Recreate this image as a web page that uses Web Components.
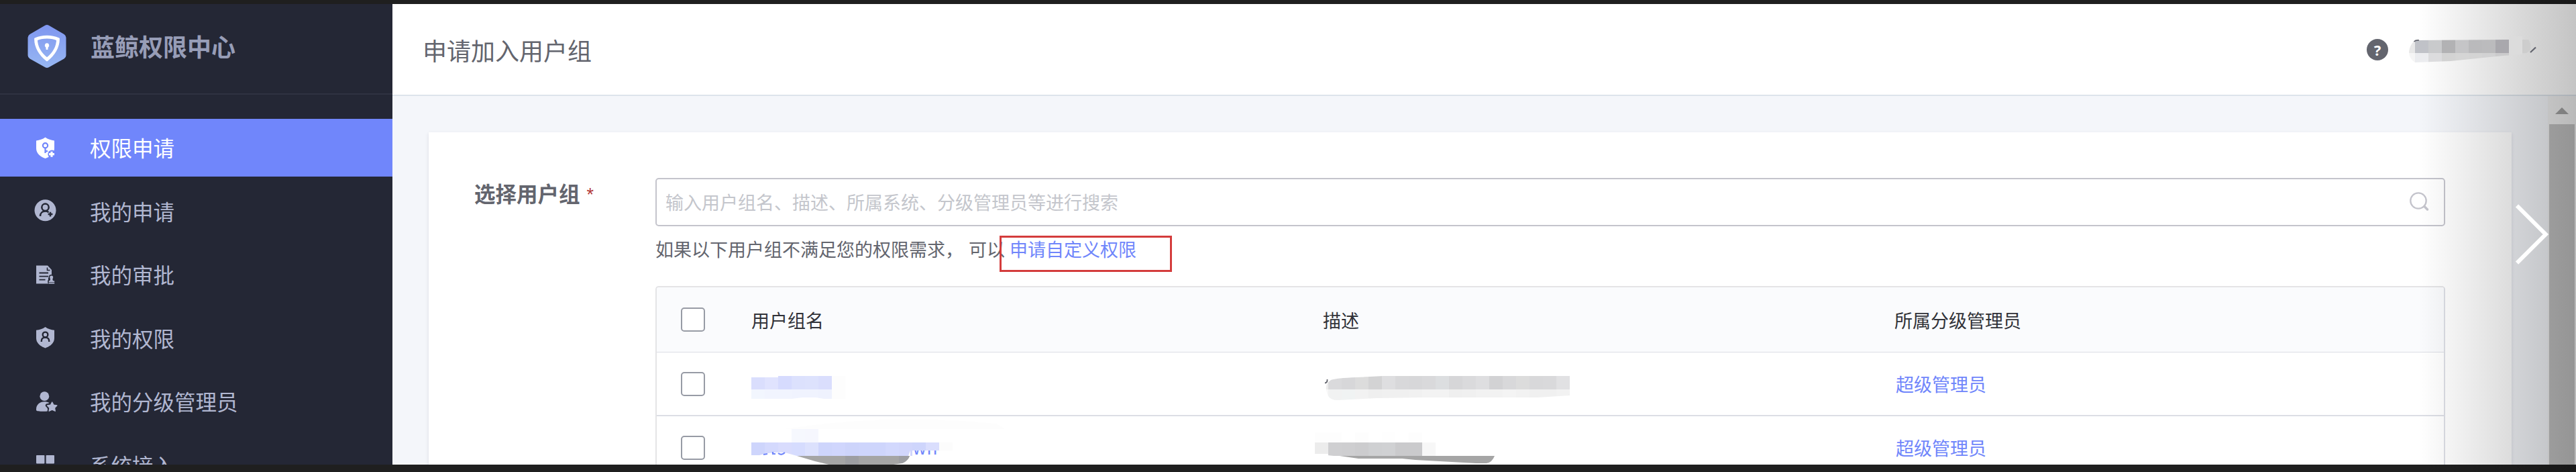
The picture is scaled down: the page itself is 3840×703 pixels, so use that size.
<!DOCTYPE html>
<html lang="zh-CN">
<head>
<meta charset="utf-8">
<title>蓝鲸权限中心</title>
<style>
html,body{margin:0;padding:0;width:100%;height:703px;overflow:hidden;background:#1f1f1f}
body{font-family:"Noto Sans CJK SC","Liberation Sans",sans-serif;color:#63656e}
</style>
</head>
<body>
<iam-app></iam-app>
<script>
const define = (name, html) => {
  const t = document.createElement('template');
  t.innerHTML = html;
  customElements.define(name, class extends HTMLElement {
    constructor() {
      super();
      this.attachShadow({ mode: 'open' }).appendChild(t.content.cloneNode(true));
    }
  });
};

const shield = 'M17.5 2.5C21.5 5.3 26 6.9 31 7.4V19C31 27 24.5 31.5 17.5 34C10.5 31.5 4 27 4 19V7.4C9 6.9 13.5 5.3 17.5 2.5Z';
const icons = {
  apply: `<path d="${shield}"/><g fill="none" stroke="var(--hole)" stroke-width="2.2"><circle cx="17.5" cy="14.7" r="3.6"/><path d="M17.5 18.3V26M17.5 23.2H21"/></g><circle cx="27.5" cy="27.7" r="6.2" fill="var(--hole)"/><path d="M27 23.7V31.7M23 27.7H31" stroke="currentColor" stroke-width="3.2"/>`,
  request: `<circle cx="17.5" cy="17.3" r="16"/><g fill="none" stroke="var(--hole)" stroke-width="2.5"><circle cx="17.5" cy="12.8" r="5.2"/><path d="M10 26C10 21.5 13 18.6 17.5 18.6C19.8 18.6 21.3 19.2 22.6 20.3M25 19.8V26.4M21.6 23.1H28.4"/></g>`,
  approve: `<path d="M4 4.5H21L27 11V19.5L22 23V31.5H4Z"/><path d="M20.5 7.5V11.5H24.5" fill="none" stroke="var(--hole)" stroke-width="1.6"/><path d="M8.5 15.5H22M8.5 20.6H22M8.5 25.6H17.5" stroke="var(--hole)" stroke-width="1.9"/><path d="M23.8 26.2C25 24.5 23.4 23.8 23.4 22A3.3 3.3 0 0 1 30 22C30 23.8 28.3 24.5 29.5 26.2L32 27V30H22V27Z" stroke="var(--hole)" stroke-width="1.6"/><path d="M22.6 30.8H31.2" stroke="currentColor" stroke-width="1.6"/>`,
  perm: `<path d="${shield}" transform="translate(0 -.6)"/><g fill="none" stroke="var(--hole)" stroke-width="2.4"><circle cx="17.5" cy="13.4" r="3.8"/><path d="M11.8 24V23C11.8 19.6 14 17.6 17.5 17.6S23.2 19.6 23.2 23V24"/></g>`,
  manager: `<circle cx="16.3" cy="10.2" r="6.9"/><path d="M4 29.5C4 22.5 9.5 18.2 16 18.2C19 18.2 21.5 18.8 23.5 20L19 22.5L20.5 27L21.5 32.5C15 33 4.5 33 4 31Z"/><path d="M27.7 18.3L30 23.2L35.2 23.8L31.3 27.4L32.4 32.8L27.7 30L23 32.8L24.1 27.4L20.2 23.8L25.4 23.2Z" stroke="var(--hole)" stroke-width="5" stroke-linejoin="round" style="fill:var(--hole)"/><path d="M27.7 19L30 23.3L34.8 24L31.4 27.4L32.2 32.2L27.7 30L23.2 32.2L24 27.4L20.6 24L25.4 23.3Z" stroke="currentColor" stroke-width="1.4" stroke-linejoin="round"/>`,
  system: `<rect x="4" y="4" width="12.4" height="12.4" rx=".8"/><rect x="18.6" y="4" width="12.4" height="12.4" rx=".8"/><rect x="4" y="18.6" width="12.4" height="12.4"/><rect x="18.6" y="18.6" width="12.4" height="12.4"/>`
};

customElements.define('nav-item', class extends HTMLElement {
  constructor() { super(); this.attachShadow({ mode: 'open' }); }
  connectedCallback() {
    this.shadowRoot.innerHTML = `<style>
      :host{--hole:#242735;display:flex;align-items:center;box-sizing:border-box;height:85.5px;padding-left:50px;gap:48px;color:#b1b7d1;font-size:31.5px;line-height:42px;white-space:nowrap;flex:none}
      :host([active]){--hole:#7086fb;background:#7086fb;color:#fff}
      svg{width:36px;height:36px;flex:none;overflow:visible;fill:currentColor}
      span{padding-bottom:1px}
      </style><svg viewBox="0 0 36 36">${icons[this.getAttribute('icon')]}</svg><span><slot></slot></span>`;
  }
});

define('side-bar', `<style>
  :host{display:flex;flex-direction:column;background:#242735;overflow:hidden;min-height:0}
  header{display:flex;align-items:center;gap:36px;height:133px;padding-left:41px;border-bottom:2px solid #2f3241;flex:none}
  svg{width:58px;height:64px;flex:none;margin-bottom:7px}
  h1{margin:0 0 10px;font-size:36px;line-height:48px;font-weight:700;color:#979db7;white-space:nowrap}
  nav{display:flex;flex-direction:column;gap:9px;padding-top:36px}
</style>
<header>
  <svg viewBox="0 0 58 64"><defs><linearGradient id="g" x1="0" y1="0" x2="0" y2="1"><stop offset="0" stop-color="#7f96f0"/><stop offset="1" stop-color="#97b7f2"/></linearGradient></defs>
    <path d="M26.3 .8Q29 -.8 31.700 .8L54.500 14Q57.500 16 57.500 19V45.500Q57.500 48.500 54.500 50.500L31.700 63.300Q29 64.700 26.300 63.300L3.500 50.500Q.5 48.500 .5 45.500V19Q.5 16 3.500 14Z" fill="url(#g)"/>
    <path d="M12.500 21.500C22 17 36 17 45.500 21.500C45.500 33 38.500 44 29 51.500C19.500 44 12.500 33 12.500 21.500Z" fill="none" stroke="#fff" stroke-width="4.800"/>
    <path d="M29 27.300A3.300 3.300 0 0 1 30.700 33.400L30.300 37H27.700L27.300 33.400A3.300 3.300 0 0 1 29 27.300Z" fill="#fff"/></svg>
  <h1>蓝鲸权限中心</h1>
</header>
<nav>
  <nav-item icon="apply" active>权限申请</nav-item>
  <nav-item icon="request">我的申请</nav-item>
  <nav-item icon="approve">我的审批</nav-item>
  <nav-item icon="perm">我的权限</nav-item>
  <nav-item icon="manager">我的分级管理员</nav-item>
  <nav-item icon="system">系统接入</nav-item>
</nav>`);

/* Pixelated cover over private text: [y, height, x, cell width, colours] per band */
const cells = rows => rows.map(([y, h, x, w, cols]) =>
  cols.split(' ').map((c, i) => `<rect x="${x + i * w}" y="${y}" width="${w}" height="${h}" fill="#${c}"/>`).join('')).join('');
const masks = {
  user: { w: 190, h: 39, body:
    `<clipPath id="c"><path d="M9 6L149 5V0H169V5H178Q183 12 181 20Q178 25 169 27L140 29L62 37L9 39Q0 33 0 23Q1 13 9 6Z"/></clipPath><g clip-path="url(#c)">` +
    cells([[5,20,-11,20,'e8e8e8 c0c2c8 c9cacc b2b2b4 c5c5c7 bababc bbbbbd a9a8ad dcdcdc cdcdcd'],[25,14,-11,20,'f5f5f5 ebecef dcdcde d3d3d3 d5d5d5 d4d4d4 d2d2d3 cbcbcc dcdcdc d5d5d5'],[0,5,149,20,'dcdcdc']]) +
    `</g><path d="M7.500 8Q10 5.500 15 6" fill="none" stroke="#63656e" stroke-width="1.600"/><path d="M181 24L189 16.500" stroke="#63656e" stroke-width="2.300"/>` },
  name1: { w: 140, h: 36, body:
    cells([[2,18,0,20,'dadefd e0e3fe'],[0,20,40,20,'d6dbfe dce1fd dde2fd dadefd'],[20,14,0,20,'f2f6fe f1f4fe f1f4fe f0f3fe f0f3fe eff2fe'],[0,34,120,20,'fdfdfd']]) + `<path d="M60 34L76 32H96L108 34Z" fill="#fff"/>` },
  name2: { w: 400, h: 84, body:
    `<path d="M50 32Q200 8 365 24L378 32Z" fill="#fdfdfd"/><text x="241" y="70" font-size="27" font-family="Liberation Sans" fill="#7086fb" textLength="36">wn</text>` +
    cells([[32,20,60,20,'f6f8fe f6f7fe'],[52,20,0,20,'ced5fc d4d9fd d9dcfd d6dcfe dce1fd ced5fc d0d6fd cdd4fb ced5fc ced5fc d2d8fd d1d6fc'],[52,12,240,20,'ced5fc dadefd'],[52,12,280,20,'fcfcfc']]) +
    `<path d="M0 71H12Q30 66 50 67L68 72H0Z" fill="#fff"/><path d="M18 70L24 69M32 66V69H36M40 68Q45 72 50 67" stroke="#7086fb" stroke-width="2.200" fill="none"/><path d="M237 64V72H234Z" fill="#fff"/>` +
    `<path d="M68 72H236Q234 79 225 83L205 86V88H128L95 80Z" fill="#a5a5a5"/><path d="M140 72H160V88H140ZM220 72H236Q234 79 225 83L220 83Z" fill="#9d9ea2"/>` },
  desc1: { w: 370, h: 40, body:
    `<clipPath id="c"><path d="M12 6Q20 3 50 2L90 0H368V29L320 32H150L80 33L22 36Q12 36 8 30Q2 18 7 10Z"/></clipPath><g clip-path="url(#c)">` +
    cells([[0,20,-12,20,'ededed dadadc d7d7d9 dcdcdc d3d3d4 dedee0 d8d8da d7d7d9 d9d9db dcdee0 d6d6d8 dadadc dedee0 d2d2d4 d8d8da dcdcdc d8d8da d9d9db e1e1e3'],[20,17,-12,20,'f8f8f8 f1f2f2 f0f3f3 f2f2f2 efefef f0f0f0 f0f0f0 f1f1f1 f3f3f3 f3f3f3 efefef f0f0f0 f2f2f2 f2f2f2 f4f4f4 f2f2f2 f0f0f0 f0f0f0 f2f2f2']]) +
    `</g><path d="M3 10.500Q7 10 6.500 5" fill="none" stroke="#63656e" stroke-width="1.800"/>` },
  desc2: { w: 280, h: 52, body:
    cells([[5,15,0,20,'fdfdfd fdfdfd ffffff fdfdfd ffffff fefefe ffffff fdfdfd'],[20,17,0,20,'ececec'],[20,20,20,20,'cfcfd1 ceced0 ccccce cfd0d2 d0d1d3 cacacc cacacc f7f7f7']]) +
    `<path d="M0 37L28 40H0Z" fill="#fff"/><path d="M37 40H268Q264 50 256 51H240L150 46L130 44H65Z" fill="#a5a5a5"/>` }
};
customElements.define('pixel-mask', class extends HTMLElement {
  constructor() { super(); this.attachShadow({ mode: 'open' }); }
  connectedCallback() {
    const m = masks[this.getAttribute('kind')];
    this.shadowRoot.innerHTML = `<style>:host{display:block;flex:none}svg{display:block;overflow:visible}</style><svg width="${m.w}" height="${m.h}">${m.body}</svg>`;
  }
});

define('top-bar', `<style>
  :host{display:flex;align-items:center;justify-content:space-between;height:137px;box-sizing:border-box;padding:2px 59px 0 45px;background:#fff;border-bottom:2px solid #dde4eb;flex:none}
  h2{margin:0;font-size:36px;font-weight:400;line-height:48px;color:#63656e;padding-bottom:2px}
  .right{display:flex;align-items:center;gap:31px;padding-bottom:2px}
  .q{width:32px;height:32px;border-radius:50%;background:#63656e;color:#fff;display:grid;place-items:center;font:700 22px/32px "Noto Sans",sans-serif}
  pixel-mask{position:relative;z-index:5}
</style>
<h2>申请加入用户组</h2>
<div class="right"><div class="q">?</div><pixel-mask kind="user"></pixel-mask></div>`);

define('search-box', `<style>
  :host{display:flex;align-items:center;justify-content:space-between;box-sizing:border-box;height:72px;padding:0 21px 0 13px;border:2px solid #c4c4cc;border-radius:5px;background:#fff;color:#c4c6cc;font-size:27px;line-height:36px}
  svg{width:31px;height:30px;fill:none;stroke:#c4c4cc;stroke-linecap:round;margin-bottom:3px}
</style>
<span><slot></slot></span>
<svg viewBox="0 0 31 30"><circle cx="14" cy="14" r="11.700" stroke-width="2.300"/><path d="M23 22.500L27.500 27" stroke-width="3.500"/></svg>`);

define('check-box', `<style>:host{display:block;box-sizing:border-box;width:36px;height:36px;border:2px solid #979ba5;border-radius:5px;background:#fff}</style>`);

define('group-row', `<style>
  :host{display:grid;grid-template-columns:108px 852px 852px 1fr;height:95px;box-sizing:border-box;border-bottom:2px solid #dcdee5;font-size:27px;line-height:36px;color:#7086fb;background:#fff;flex:none}
  :host([head]){background:#fafbfd;color:#313238;height:97px;border-bottom-width:1px}
  .cell{display:flex;align-items:center;padding-left:33px;min-width:0}
  .check{padding-left:36px;box-sizing:border-box}
  :host([head]) .check{border-bottom:1px solid #dcdee5;height:97px}
  .last{padding-left:35px}
  :host([head]) .last{padding-left:33px}
</style>
<div class="cell check"><check-box></check-box></div>
<div class="cell"><slot name="name"></slot></div>
<div class="cell"><slot name="desc"></slot></div>
<div class="cell last"><slot name="admin"></slot></div>`);

define('group-table', `<style>
  :host{display:flex;flex-direction:column;border:2px solid #e4e4e6;border-right-color:#dcdee5;border-bottom:0;border-radius:5px 5px 0 0;overflow:hidden;flex:1;min-height:0}
  .n1{margin-top:12px}
  .n2{margin-top:-13px;align-self:flex-start}
  .d1{margin:16px 0 0 0}
  .d2{margin:19px 0 0 -12px;align-self:flex-start}
</style>
<group-row head><span slot="name">用户组名</span><span slot="desc">描述</span><span slot="admin">所属分级管理员</span></group-row>
<group-row><pixel-mask slot="name" class="n1" kind="name1"></pixel-mask><pixel-mask slot="desc" class="d1" kind="desc1"></pixel-mask><span slot="admin">超级管理员</span></group-row>
<group-row><pixel-mask slot="name" class="n2" kind="name2"></pixel-mask><pixel-mask slot="desc" class="d2" kind="desc2"></pixel-mask><span slot="admin">超级管理员</span></group-row>`);

define('form-card', `<style>
  :host{display:grid;grid-template-columns:270px 2668px;box-sizing:border-box;background:#fff;box-shadow:0 2px 5px rgba(60,60,90,.14);padding:68px 0 0 68px;min-height:0;overflow:hidden}
  .label{font-size:31.500px;line-height:42px;font-weight:700;color:#63656e;padding-top:1px;white-space:nowrap}
  .label i{font:400 27px/36px "Liberation Sans",sans-serif;color:#b33b3b;margin-left:10px;vertical-align:2px}
  .field{display:flex;flex-direction:column;min-height:0}
  .tip{display:flex;align-items:center;height:36px;margin:16px 0 37px;font-size:27px;line-height:36px;white-space:pre}
  .tip>span+span{margin-left:8px}
  .tip>.link{position:relative;color:#7086fb;margin-left:7px}
  .mark{position:absolute;left:-15px;top:-2px;width:257px;height:54px;box-sizing:border-box;border:3px solid #d43c3c}
</style>
<div class="label">选择用户组<i>*</i></div>
<div class="field">
  <search-box>输入用户组名、描述、所属系统、分级管理员等进行搜索</search-box>
  <div class="tip"><span>如果以下用户组不满足您的权限需求，</span><span>可以</span><span class="link">申请自定义权限<span class="mark"></span></span></div>
  <group-table></group-table>
</div>`);

define('scroll-bar', `<style>
  :host{display:flex;flex-direction:column;align-items:center;background:#f1f1f1;width:42px;box-sizing:border-box}
  svg{width:20px;height:10px;margin:17px 0 15px;flex:none}
  .thumb{flex:1;width:38px;background:#c1c1c1}
</style><svg viewBox="0 0 20 10"><path d="M10 0L20 10H0Z" fill="#a3a3a3"/></svg><div class="thumb"></div>`);

define('next-shade', `<style>
  :host{position:absolute;right:0;top:0;width:235px;height:703px;background:linear-gradient(90deg,rgba(0,0,0,0),rgba(0,0,0,.23));pointer-events:none;z-index:3}
  svg{position:absolute;left:145px;top:300px;width:52px;height:98px;overflow:visible}
</style><svg viewBox="0 0 52 98"><path d="M2 6.300L44.800 49L2 91.700" fill="none" stroke="#fff" stroke-width="6"/></svg>`);

define('iam-app', `<style>
  :host{display:grid;grid-template-columns:585px 1fr;height:703px;box-sizing:border-box;padding:6px 0 11px;background:#1f1f1f;position:relative;overflow:hidden}
  main{display:flex;flex-direction:column;min-width:0;min-height:0;background:#f4f6fa}
  .body{display:grid;grid-template-columns:1fr 42px;flex:1;min-height:0;overflow:hidden}
  form-card{margin:54px 54px 0 54px}
</style>
<side-bar></side-bar>
<main><top-bar></top-bar>
  <div class="body"><form-card></form-card><scroll-bar></scroll-bar></div>
</main>
<next-shade></next-shade>`);
</script>
</body>
</html>
